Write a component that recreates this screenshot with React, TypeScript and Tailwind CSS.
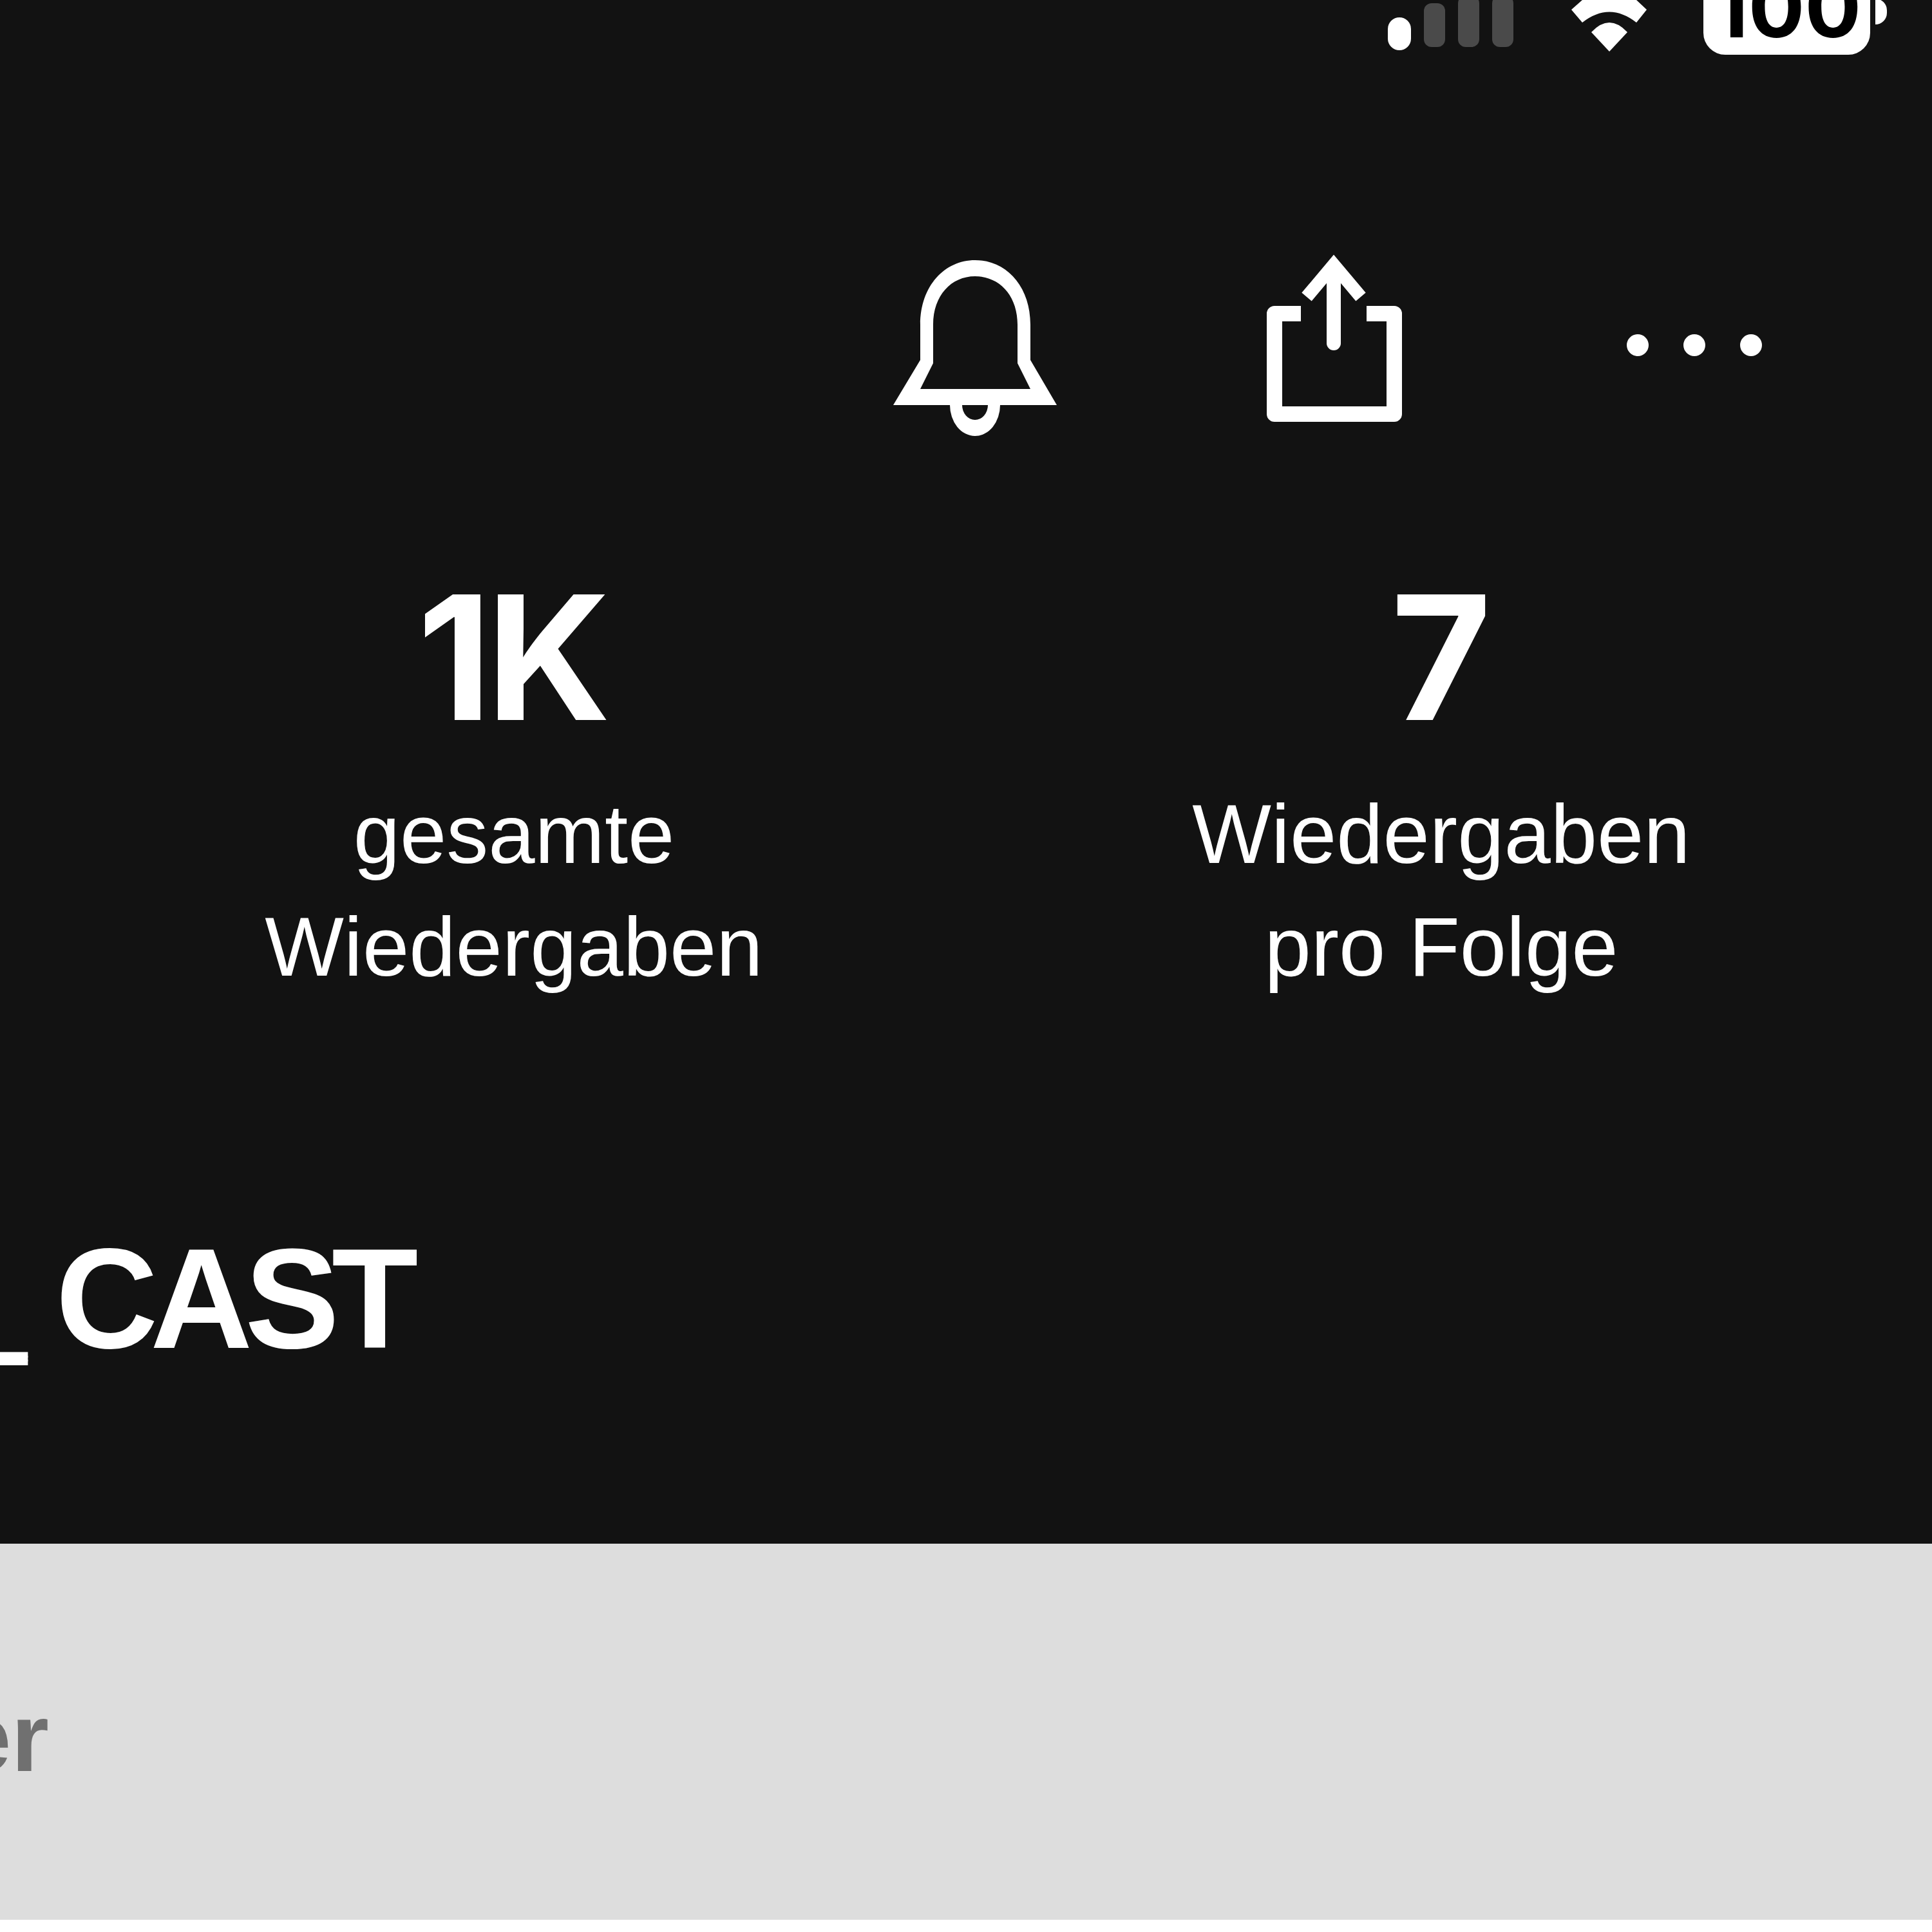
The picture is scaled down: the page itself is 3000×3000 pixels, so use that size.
export default function App() {
  return (
    <div className="w-[3000px] h-[3000px] overflow-hidden flex flex-col bg-white font-['Liberation_Sans',sans-serif]">
      <div className="h-[2397px] bg-[#121212] flex flex-col text-white shrink-0">
        <div className="h-[90px] overflow-hidden flex items-end justify-end pr-[70px] shrink-0">
          <div className="flex items-end gap-[20px] pb-[12px] mr-[84px]">
            <div className="w-[36px] h-[51px] rounded-full bg-white" />
            <div className="w-[33px] h-[68px] rounded-[12px] bg-[#4a4a4a] mb-[5px]" />
            <div className="w-[33px] h-[80px] rounded-[12px] bg-[#4a4a4a] mb-[5px]" />
            <div className="w-[33px] h-[80px] rounded-[12px] bg-[#4a4a4a] mb-[5px]" />
          </div>
          <svg viewBox="0 0 130 90" className="w-[130px] h-[90px] mr-[81px]" fill="#fff">
            <path d="M23 0 L6 15 L23 35 Q65 2 107 35 L123 15 L107 0Z" />
            <path d="M37 50 Q65 20 93 50 L65 80Z" />
          </svg>
          <div className="mb-[5px] w-[259px] h-[90px] bg-white rounded-b-[34px] flex items-end justify-center text-black text-[130px] leading-[100px] font-bold font-['Inter',sans-serif] overflow-hidden pb-[24px]">
            100
          </div>
          <div className="w-[18px] h-[40px] mb-[52px] ml-[8px] rounded-r-full bg-white" />
        </div>
        <div className="flex items-center justify-end h-[300px] mt-[300px] shrink-0">
          <svg viewBox="0 0 254 273" className="w-[254px] h-[273px] mr-[326px]" fill="#fff">
            <path
              fillRule="evenodd"
              d="M0 225 L42 155 V100 C42 40 80 0 127 0 C175 0 213 40 213 100 V155 L254 225Z M42 200 H213 L193 160 V100 C193 55 165 25 127 25 C90 25 62 55 62 100 V160Z"
            />
            <path d="M88 225 A39 48 0 0 0 166 225 H147 A20 23 0 0 1 107 225Z" />
          </svg>
          <svg viewBox="0 0 210 260" className="w-[210px] h-[260px] mr-[349px] mb-[30px]" fill="none" stroke="#fff">
            <path d="M53 92 H12 V248 H198 V92 H155" strokeWidth="24" strokeLinejoin="round" />
            <path d="M104 20 V138" strokeWidth="22" strokeLinecap="round" />
            <path d="M62 66 L104 16 L146 66" strokeWidth="20" strokeLinejoin="miter" />
          </svg>
          <div className="flex gap-[54px] mr-[264px] mb-[8px]">
            <div className="w-[34px] h-[34px] rounded-full bg-white" />
            <div className="w-[34px] h-[34px] rounded-full bg-white" />
            <div className="w-[34px] h-[34px] rounded-full bg-white" />
          </div>
        </div>
        <div className="flex mt-[181px] shrink-0">
          <div className="w-[1596px] flex flex-col items-center">
            <div className="text-[268px] leading-[300px] font-bold tracking-[-8px] mr-[8px] font-['Inter',sans-serif]">1K</div>
            <div className="text-[130px] leading-[175px] text-center mt-[37px]">gesamte<br />Wiedergaben</div>
          </div>
          <div className="w-[1284px] flex flex-col items-center">
            <div className="text-[268px] leading-[300px] font-bold font-['Inter',sans-serif]">7</div>
            <div className="text-[130px] leading-[175px] text-center mt-[37px]">Wiedergaben<br />pro Folge</div>
          </div>
        </div>
        <div className="ml-[-81px] mt-[349px] text-[220px] leading-[220px] font-bold tracking-[-12px] [word-spacing:8px] whitespace-nowrap">
          <span className="[text-shadow:0_-6px_0_#fff,0_-12px_0_#fff]">_</span> CAST
        </div>
      </div>
      <div className="h-[584px] bg-[#dddddd] shrink-0 pt-[226px]">
        <div className="ml-[-216px] text-[150px] leading-[150px] font-bold text-[#707070]">Hier</div>
      </div>
    </div>
  );
}
